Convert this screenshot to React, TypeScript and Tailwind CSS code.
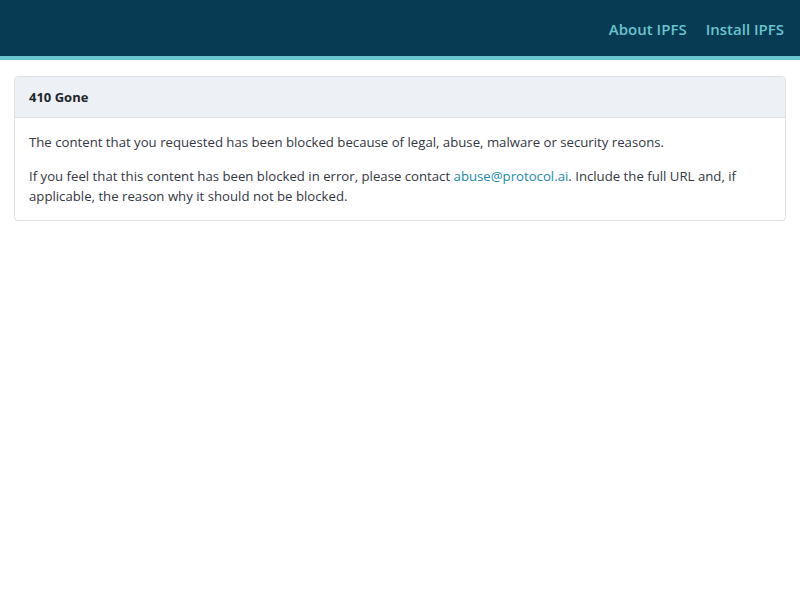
export default function App() {
  return (
    <div className="min-h-[600px] bg-white text-[#34373f]" style={{ fontFamily: '"Open Sans", "Noto Sans", sans-serif' }}>
      <header className="h-[60px] bg-[#073a53] border-b-4 border-[#69c4cd] flex items-center justify-end gap-[19px] pr-4 pt-[2px]">
        <a className="text-[15px] font-semibold text-[#69c4cd]">About IPFS</a>
        <a className="text-[15px] font-semibold text-[#69c4cd]">Install IPFS</a>
      </header>
      <main className="px-[14px] pt-4">
        <div className="border border-[#dde1e6] rounded-[4px] overflow-hidden">
          <div className="h-[41px] bg-[#edf0f4] border-b border-[#dde1e6] flex items-center px-[14px] pt-[2px] text-[13px] font-bold text-[#212529]">
            410 Gone
          </div>
          <div className="px-[14px] pt-[14px] pb-[14px] text-[13.2px] leading-[20px] flex flex-col gap-[14px]">
            <p>The content that you requested has been blocked because of legal, abuse, malware or security reasons.</p>
            <p>
              If you feel that this content has been blocked in error, please contact{" "}
              <a className="text-[#1b8bad]">abuse@protocol.ai</a>. Include the full URL and, if applicable, the reason why it should not be blocked.
            </p>
          </div>
        </div>
      </main>
    </div>
  );
}
